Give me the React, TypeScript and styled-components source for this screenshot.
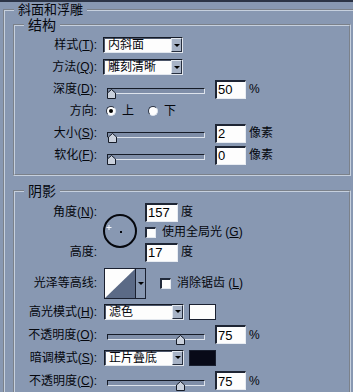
import React from 'react';
import styled, { createGlobalStyle } from 'styled-components';

const GlobalStyle = createGlobalStyle`
  html, body {
    margin: 0;
    padding: 0;
  }
  body {
    background: #8898b2;
    overflow: hidden;
    font-family: "Liberation Sans", "Noto Sans CJK SC", sans-serif;
    color: #05070d;
  }
`;

const Dialog = styled.div`
  width: 353px;
  height: 392px;
  overflow: hidden;
  box-sizing: border-box;
  border-top: 2px solid #2c3446;
`;

const Group = styled.fieldset<{ $outer?: boolean; $gapTop?: number }>`
  margin: ${(p) => (p.$outer ? '0 -6px 0 3px' : `${p.$gapTop ?? 0}px 0 0 0`)};
  padding: ${(p) => (p.$outer ? '0 6px 0 8px' : '1px 0 8px 9px')};
  border: 2px groove #c6d0de;
  min-width: 0;
  min-inline-size: 0;
`;

const Legend = styled.legend<{ $size: number; $offset?: number; $lh?: number }>`
  padding: 0 4px;
  margin-left: ${(p) => p.$offset ?? 0}px;
  font-size: ${(p) => p.$size}px;
  line-height: ${(p) => p.$lh ?? 16}px;
`;

const Row = styled.div<{ $h?: number; $top?: number }>`
  display: grid;
  grid-template-columns: 73px auto;
  column-gap: 6px;
  align-items: center;
  height: ${(p) => p.$h ?? 22}px;
  margin-top: ${(p) => p.$top ?? 0}px;
`;

const Label = styled.span`
  text-align: right;
  font-size: 12px;
  line-height: 14px;
  white-space: nowrap;
`;

const Controls = styled.div`
  display: flex;
  align-items: center;
  height: 100%;
`;

const SelectBox = styled.div<{ $lead?: number }>`
  width: 80px;
  height: 16px;
  box-sizing: border-box;
  margin-left: ${(p) => p.$lead ?? 0}px;
  display: flex;
  background: #fdfdfd;
  border: 1px solid;
  border-color: #141a26 #e2e7ee #e2e7ee #141a26;
  box-shadow: inset 1px 1px 0 #4c566a;
`;

const SelectText = styled.span`
  flex: 1;
  padding-left: 4px;
  font-size: 12px;
  line-height: 14px;
`;

const ArrowBtn = styled.span`
  width: 11px;
  box-sizing: border-box;
  display: flex;
  align-items: center;
  justify-content: center;
  background: #a7b3c6;
  border: 1px solid;
  border-color: #e2e8f0 #262e3e #262e3e #e2e8f0;
`;

const Caret = styled.span`
  width: 0;
  height: 0;
  border-left: 3px solid transparent;
  border-right: 3px solid transparent;
  border-top: 3px solid #000;
`;

const Swatch = styled.span<{ $color: string }>`
  width: 27px;
  height: 16px;
  box-sizing: border-box;
  margin-left: 5px;
  background: ${(p) => p.$color};
  border: 1px solid #1a2030;
`;

const SliderWrap = styled.div`
  position: relative;
  width: 98px;
  height: 22px;
  margin-left: 4px;
`;

const Track = styled.div`
  margin-top: 10px;
  height: 6px;
  box-sizing: border-box;
  border: 1px solid;
  border-color: #151b27 #dde3ec #dde3ec #151b27;
  background: #7f8ea8;
`;

const Thumb = styled.svg`
  position: absolute;
  top: 11px;
`;

const NumInput = styled.input<{ $w?: number; $lead?: number }>`
  width: ${(p) => p.$w ?? 31}px;
  height: 19px;
  box-sizing: border-box;
  margin: 0 0 0 ${(p) => p.$lead ?? 10}px;
  padding: 0 0 0 1px;
  background: #fdfdfd;
  border-style: solid;
  border-width: 2px 1px 1px 2px;
  border-color: #1e2534 #e8ecf2 #e8ecf2 #1e2534;
  font: 13px "Liberation Sans", Arial, sans-serif;
  color: #000;
  outline: none;
`;

const Unit = styled.span`
  margin-left: 3px;
  font-size: 12px;
  line-height: 14px;
  white-space: nowrap;
`;

const RadioDot = styled.span<{ $on?: boolean; $lead: number }>`
  width: 10px;
  height: 10px;
  box-sizing: border-box;
  margin-left: ${(p) => p.$lead}px;
  border-radius: 50%;
  background: #fff;
  border: 1px solid;
  border-color: #2a3242 #dde3ec #dde3ec #2a3242;
  display: flex;
  align-items: center;
  justify-content: center;

  &::after {
    content: '';
    width: 4px;
    height: 4px;
    border-radius: 50%;
    background: ${(p) => (p.$on ? '#000' : 'transparent')};
  }
`;

const OptionText = styled.span<{ $gap?: number }>`
  margin-left: ${(p) => p.$gap ?? 6}px;
  font-size: 12px;
  line-height: 14px;
  white-space: nowrap;
`;

const CheckBox = styled.span<{ $lead?: number }>`
  width: 11px;
  height: 11px;
  box-sizing: border-box;
  margin-left: ${(p) => p.$lead ?? 0}px;
  background: #fdfdfd;
  border-style: solid;
  border-width: 2px 1px 1px 2px;
  border-color: #222a3a #e4e9f0 #e4e9f0 #222a3a;
`;

const AngleGrid = styled.div`
  display: grid;
  grid-template-columns: 73px 36px auto;
  grid-template-rows: 22px 18px 22px;
  column-gap: 6px;
  align-items: center;
  margin-top: 1px;
`;

const Dial = styled.svg`
  grid-column: 2;
  grid-row: 1 / 4;
  align-self: start;
  margin-top: 12px;
`;

const ContourPicker = styled.div`
  display: flex;
  width: 42px;
  height: 31px;
  box-sizing: border-box;
  margin-left: 1px;
  border: 1px solid #1a2030;
`;

const ContourArrow = styled.span`
  flex: 1;
  display: flex;
  align-items: center;
  justify-content: center;
  background: #8898b2;
  border-left: 1px solid #1a2030;
`;

const Slider = ({ pos }: { pos: number }) => (
  <SliderWrap>
    <Track />
    <Thumb width="9" height="10" viewBox="0 0 9 10" style={{ left: Math.round(pos * 89) }}>
      <polygon points="0.5,9.5 0.5,4 4.5,0.5 8.5,4 8.5,9.5" fill="#c9d0dc" stroke="#161c28" />
    </Thumb>
  </SliderWrap>
);

const Select = ({ text, lead }: { text: string; lead?: number }) => (
  <SelectBox $lead={lead}>
    <SelectText>{text}</SelectText>
    <ArrowBtn>
      <Caret />
    </ArrowBtn>
  </SelectBox>
);

const SliderRow = ({
  label,
  pos,
  value,
  unit,
}: {
  label: React.ReactNode;
  pos: number;
  value: string;
  unit: string;
}) => (
  <Row>
    <Label>{label}</Label>
    <Controls>
      <Slider pos={pos} />
      <NumInput readOnly value={value} />
      <Unit>{unit}</Unit>
    </Controls>
  </Row>
);

function App() {
  return (
    <>
      <GlobalStyle />
      <Dialog>
        <Group $outer>
          <Legend $size={13} $offset={1} $lh={15}>斜面和浮雕</Legend>

          <Group>
            <Legend $size={14}>结构</Legend>
            <Row>
              <Label>样式(<u>T</u>):</Label>
              <Controls>
                <Select text="内斜面" />
              </Controls>
            </Row>
            <Row>
              <Label>方法(<u>Q</u>):</Label>
              <Controls>
                <Select text="雕刻清晰" />
              </Controls>
            </Row>
            <SliderRow label={<>深度(<u>D</u>):</>} pos={0} value="50" unit="%" />
            <Row>
              <Label>方向:</Label>
              <Controls>
                <RadioDot $on $lead={3} />
                <OptionText>上</OptionText>
                <RadioDot $lead={14} />
                <OptionText>下</OptionText>
              </Controls>
            </Row>
            <SliderRow label={<>大小(<u>S</u>):</>} pos={0.01} value="2" unit="像素" />
            <SliderRow label={<>软化(<u>F</u>):</>} pos={0} value="0" unit="像素" />
          </Group>

          <Group $gapTop={7}>
            <Legend $size={14}>阴影</Legend>
            <AngleGrid>
              <Label>角度(<u>N</u>):</Label>
              <Dial width="36" height="36" viewBox="0 0 36 36">
                <circle cx="17" cy="18" r="16" fill="none" stroke="#05070d" strokeWidth="2" />
                <rect x="17" y="18" width="2" height="2" fill="#05070d" />
                <path d="M6 12v5M3.5 14.5h5" stroke="#f4f6fa" strokeWidth="1" />
              </Dial>
              <Controls>
                <NumInput readOnly value="157" $w={33} $lead={0} />
                <Unit>度</Unit>
              </Controls>
              <Controls style={{ gridColumn: 3 }}>
                <CheckBox />
                <OptionText>使用全局光 (<u>G</u>)</OptionText>
              </Controls>
              <Label style={{ gridColumn: 1 }}>高度:</Label>
              <Controls style={{ gridColumn: 3 }}>
                <NumInput readOnly value="17" $w={33} $lead={0} />
                <Unit>度</Unit>
              </Controls>
            </AngleGrid>

            <Row $h={34} $top={3}>
              <Label>光泽等高线:</Label>
              <Controls>
                <ContourPicker>
                  <svg width="30" height="29" viewBox="0 0 30 29">
                    <rect width="30" height="29" fill="#fdfdfd" />
                    <polygon points="30,0 30,29 0,29" fill="#5b6a86" />
                  </svg>
                  <ContourArrow>
                    <Caret />
                  </ContourArrow>
                </ContourPicker>
                <CheckBox $lead={14} />
                <OptionText>消除锯齿 (<u>L</u>)</OptionText>
              </Controls>
            </Row>

            <Row $h={23}>
              <Label>高光模式(<u>H</u>):</Label>
              <Controls>
                <Select text="滤色" lead={1} />
                <Swatch $color="#fdfdfd" />
              </Controls>
            </Row>
            <Row $h={23}>
              <Label>不透明度(<u>O</u>):</Label>
              <Controls>
                <Slider pos={0.78} />
                <NumInput readOnly value="75" />
                <Unit>%</Unit>
              </Controls>
            </Row>
            <Row $h={23}>
              <Label>暗调模式(<u>S</u>):</Label>
              <Controls>
                <Select text="正片叠底" lead={1} />
                <Swatch $color="#080a18" />
              </Controls>
            </Row>
            <Row $h={23}>
              <Label>不透明度(<u>C</u>):</Label>
              <Controls>
                <Slider pos={0.78} />
                <NumInput readOnly value="75" />
                <Unit>%</Unit>
              </Controls>
            </Row>
          </Group>
        </Group>
      </Dialog>
    </>
  );
}

export default App;
